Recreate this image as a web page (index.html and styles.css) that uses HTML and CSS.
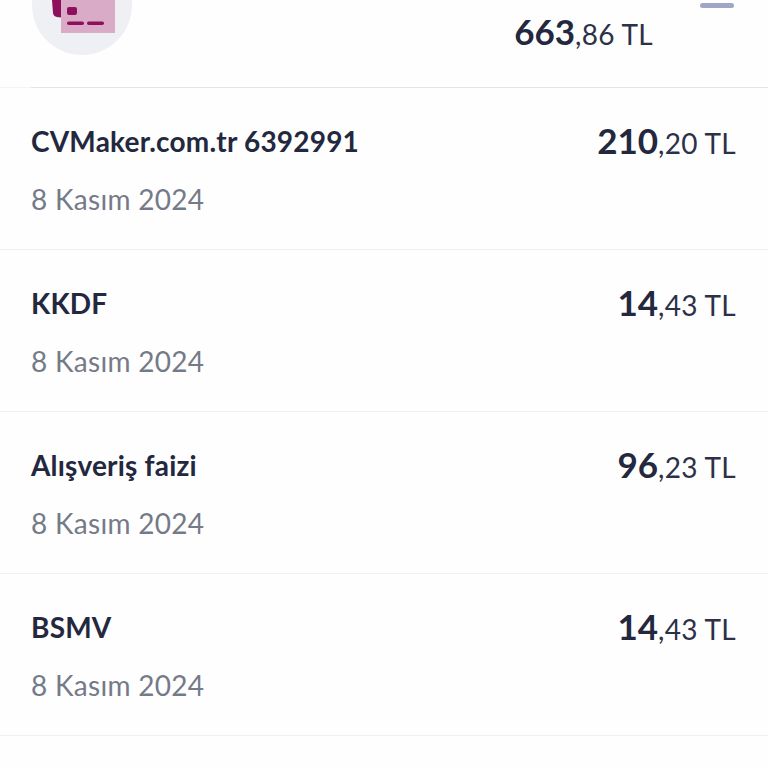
FILE: index.html
```html
<!DOCTYPE html>
<html lang="tr">
<head>
    <meta charset="UTF-8">
    <title>Ekstre</title>
    <link rel="stylesheet" href="styles.css">
</head>
<body>
    <div class="summary">
        <div class="summary-icon">
            <svg width="84" height="36" viewBox="0 0 84 36">
                <rect x="21" y="0" width="54" height="33" fill="#d9abc7"/>
                <path d="M12 0h9v17.500l-4 -0.500q-3.500 -0.500 -4 -4z" fill="#8e0f5c"/>
                <rect x="27" y="7" width="10" height="8" rx="2" fill="#8e0f5c"/>
                <rect x="27" y="21.500" width="17" height="3.500" rx="1.750" fill="#8e0f5c"/>
                <rect x="47" y="21.500" width="17" height="3.500" rx="1.750" fill="#8e0f5c"/>
            </svg>
        </div>
        <div class="amount summary-amount"><b>663</b>,86 TL</div>
        <div class="summary-handle"></div>
    </div>

    <div class="row">
        <div class="row-info">
            <div class="row-title">CVMaker.com.tr 6392991</div>
            <div class="row-date">8 Kasım 2024</div>
        </div>
        <div class="amount"><b>210</b>,20 TL</div>
    </div>
    <div class="row">
        <div class="row-info">
            <div class="row-title">KKDF</div>
            <div class="row-date">8 Kasım 2024</div>
        </div>
        <div class="amount"><b>14</b>,43 TL</div>
    </div>
    <div class="row">
        <div class="row-info">
            <div class="row-title">Alışveriş faizi</div>
            <div class="row-date">8 Kasım 2024</div>
        </div>
        <div class="amount"><b>96</b>,23 TL</div>
    </div>
    <div class="row">
        <div class="row-info">
            <div class="row-title">BSMV</div>
            <div class="row-date">8 Kasım 2024</div>
        </div>
        <div class="amount"><b>14</b>,43 TL</div>
    </div>
</body>
</html>
```

FILE: styles.css
```css
body {
    margin: 0;
    height: 768px;
    overflow: hidden;
    background-color: #fefefe;
    font-family: 'Lato', 'Noto Sans', sans-serif;
    color: #23283f;
}
.summary {
    display: flex;
    justify-content: space-between;
    height: 88px;
    box-sizing: border-box;
    padding: 0 32px;
    border-bottom: 1px solid #e6e6e8;
    border-image: linear-gradient(to right, #f4f4f5 32px, #e4e4e6 32px) 1;
    overflow: hidden;
}
.summary-icon {
    width: 100px;
    height: 100px;
    margin-top: -45px;
    display: flex;
    align-items: flex-end;
    justify-content: center;
    padding-bottom: 19px;
    box-sizing: border-box;
    border-radius: 50%;
    background-color: #eff0f4;
}
.summary-icon svg {
    flex-shrink: 0;
}
.summary-amount {
    margin: 14px 0 0 auto;
}
.summary-handle {
    width: 34px;
    height: 5px;
    margin: 3px 2px 0 47px;
    border-radius: 3px;
    background-color: #a0a6c3;
}
.row {
    display: flex;
    justify-content: space-between;
    height: 162px;
    box-sizing: border-box;
    padding: 35px 32px 0 31px;
    border-bottom: 1px solid #efeff1;
}
.row-title {
    font-size: 28px;
    line-height: 36px;
    font-weight: 700;
    letter-spacing: 0.2px;
}
.row-date {
    margin-top: 22px;
    font-size: 28px;
    line-height: 36px;
    letter-spacing: 0.3px;
    color: #757a88;
}
.amount {
    font-size: 28px;
    line-height: 34px;
    letter-spacing: 0.3px;
    color: #2c3148;
}
.amount b {
    font-size: 35px;
    letter-spacing: 0;
    color: #23283f;
}
```
